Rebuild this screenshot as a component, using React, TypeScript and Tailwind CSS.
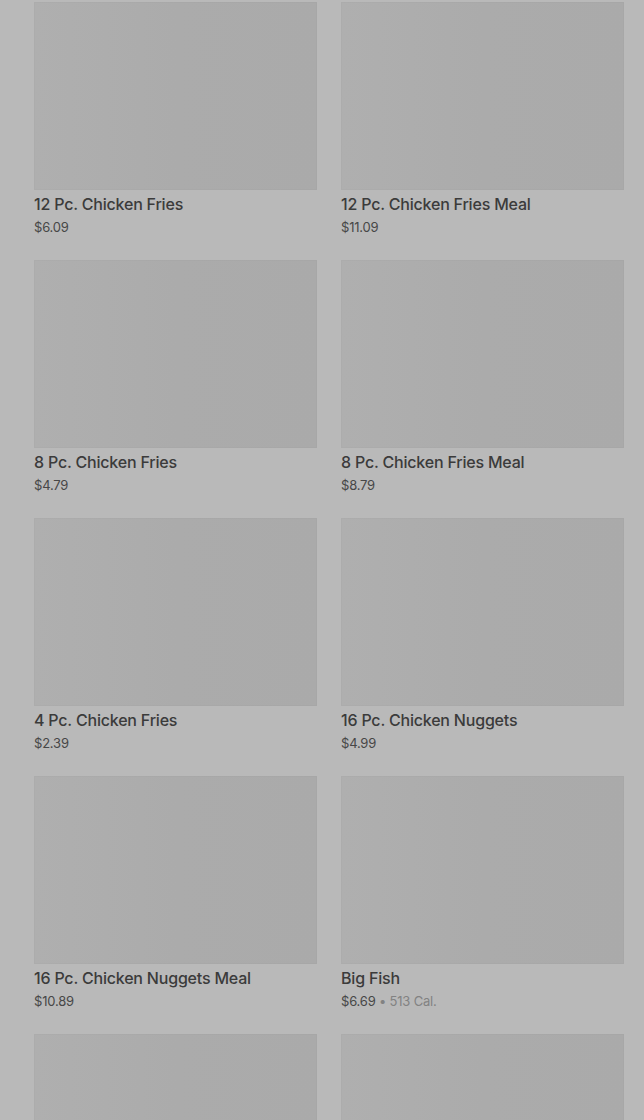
import React from 'react';

type Item = { name: string; price: string; cal?: string };

const items: Item[] = [
  { name: '12 Pc. Chicken Fries', price: '$6.09' },
  { name: '12 Pc. Chicken Fries Meal', price: '$11.09' },
  { name: '8 Pc. Chicken Fries', price: '$4.79' },
  { name: '8 Pc. Chicken Fries Meal', price: '$8.79' },
  { name: '4 Pc. Chicken Fries', price: '$2.39' },
  { name: '16 Pc. Chicken Nuggets', price: '$4.99' },
  { name: '16 Pc. Chicken Nuggets Meal', price: '$10.89' },
  { name: 'Big Fish', price: '$6.69', cal: '513 Cal.' },
  { name: '', price: '' },
  { name: '', price: '' },
];

function MenuCard({ item }: { item: Item }) {
  return (
    <div className="flex flex-col">
      <div className="h-[188px] bg-[#ababab] shadow-[inset_0_0_0_1px_rgba(0,0,0,0.015)] bg-gradient-to-r from-[#afafaf] via-[#ababab] to-[#aaaaaa]" />
      <div className="pt-[4px] pb-[24px]">
        <p className="text-[16px] leading-[20px] font-medium text-[#3b3b3b] tracking-[-0.2px]">{item.name}</p>
        <p className="mt-[4px] h-[18px] text-[13px] leading-[18px] text-[#474747] tracking-[-0.2px]">
          {item.price}
          {item.cal && (
            <span className="text-[#828282]">
              {' '}• {item.cal}
            </span>
          )}
        </p>
      </div>
    </div>
  );
}

export default function App() {
  return (
    <div
      className="h-[1120px] w-[644px] overflow-hidden bg-[#b9b9b9]"
      style={{ fontFamily: 'Inter, "Noto Sans", sans-serif' }}
    >
      <div className="grid grid-cols-2 gap-x-[24px] pl-[34px] pr-[20px] pt-[2px]">
        {items.map((item, i) => (
          <MenuCard key={i} item={item} />
        ))}
      </div>
    </div>
  );
}
